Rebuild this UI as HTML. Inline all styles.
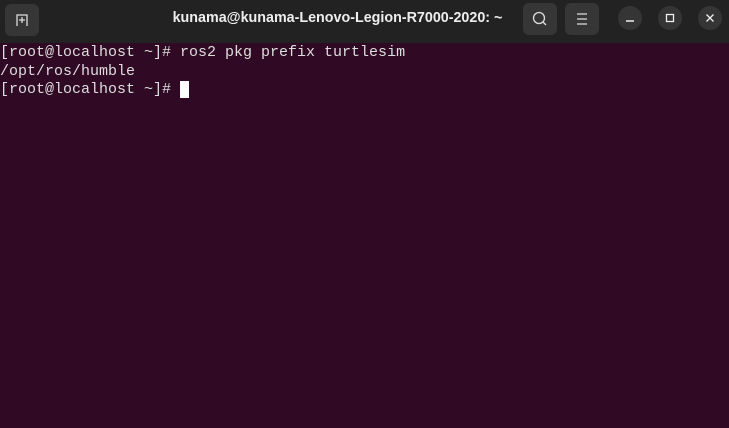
<!DOCTYPE html><html><head><style>
body{margin:0;width:729px;height:428px;background:#300a24;overflow:hidden;font-family:"Liberation Sans",sans-serif}
.hd{position:absolute;left:0;top:0;width:729px;height:43px;background:#222}
.b{position:absolute;top:3px;width:34px;height:32px;background:#363636;border-radius:6px}
.c{position:absolute;top:6px;width:24px;height:24px;background:#353535;border-radius:50%}
.t{position:absolute;top:10px;left:0;width:675px;text-align:center;color:#eee;font-weight:bold;font-size:14.3px}
pre{position:absolute;left:0;top:44px;margin:0;font-family:"Liberation Mono",monospace;font-size:15px;line-height:18.5px;color:#ddd}
.cur{position:absolute;left:180px;top:81px;width:9px;height:17px;background:#fff}
</style></head><body>
<div class="hd">
<div class="b" style="left:5px;top:4px;width:34px;height:32px"><svg width="34" height="32"><path d="M12 22V11h10v11M17 13v6M14 16h6" stroke="#ddd" stroke-width="1.3" fill="none"/></svg></div>
<div class="t">kunama@kunama-Lenovo-Legion-R7000-2020: ~</div>
<div class="b" style="left:523px"><svg width="34" height="32"><circle cx="16" cy="15" r="5.5" stroke="#ddd" stroke-width="1.3" fill="none"/><path d="M20 19l3 3" stroke="#ddd" stroke-width="1.3"/></svg></div>
<div class="b" style="left:565px"><svg width="34" height="32"><path d="M12 11h10M12 16h10M12 21h10" stroke="#ddd" stroke-width="1.2"/></svg></div>
<div class="c" style="left:618px"><svg width="24" height="24"><path d="M8 15h8" stroke="#eee" stroke-width="1.5"/></svg></div>
<div class="c" style="left:658px"><svg width="24" height="24"><rect x="8.5" y="8.5" width="7" height="7" stroke="#eee" stroke-width="1.3" fill="none"/></svg></div>
<div class="c" style="left:698px"><svg width="24" height="24"><path d="M8.5 8.5l7 7M15.5 8.5l-7 7" stroke="#eee" stroke-width="1.3"/></svg></div>
</div>
<pre>[root@localhost ~]# ros2 pkg prefix turtlesim
/opt/ros/humble
[root@localhost ~]# </pre>
<div class="cur"></div>
</body></html>
